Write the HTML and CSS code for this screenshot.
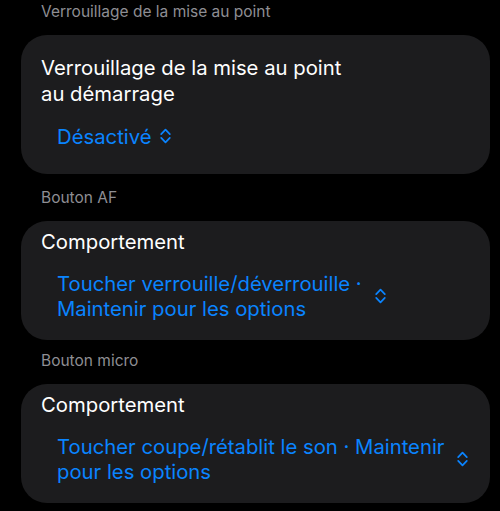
FILE: index.html
```html
<!DOCTYPE html>
<html lang="fr">
<head>
  <meta charset="UTF-8">
  <title>Réglages</title>
  <link rel="stylesheet" href="styles.css">
</head>
<body>
  <div class="list">

    <!-- Verrouillage -->
    <div class="group group-top">
      <div class="group-label">Verrouillage de la mise au point</div>
      <div class="card card-tall">
        <div class="title">Verrouillage de la mise au point<br>au démarrage</div>
        <div class="value value-single">
          <span>Désactivé</span>
          <svg class="chevron" viewBox="0 0 11 16"><path d="M1.2 6.2 L5.5 1.6 L9.8 6.2 M1.2 9.8 L5.5 14.4 L9.8 9.8"/></svg>
        </div>
      </div>
    </div>

    <!-- Bouton AF -->
    <div class="group">
      <div class="group-label">Bouton AF</div>
      <div class="card">
        <div class="title">Comportement</div>
        <div class="value">
          <span>Toucher verrouille/déverrouille ·<br>Maintenir pour les options</span>
          <svg class="chevron" viewBox="0 0 11 16"><path d="M1.2 6.2 L5.5 1.6 L9.8 6.2 M1.2 9.8 L5.5 14.4 L9.8 9.8"/></svg>
        </div>
      </div>
    </div>

    <!-- Bouton micro -->
    <div class="group">
      <div class="group-label">Bouton micro</div>
      <div class="card">
        <div class="title">Comportement</div>
        <div class="value">
          <span>Toucher coupe/rétablit le son · Maintenir<br>pour les options</span>
          <svg class="chevron" viewBox="0 0 11 16"><path d="M1.2 6.2 L5.5 1.6 L9.8 6.2 M1.2 9.8 L5.5 14.4 L9.8 9.8"/></svg>
        </div>
      </div>
    </div>

  </div>
</body>
</html>
```

FILE: styles.css
```css
body { margin: 0; background: #000; font-family: Inter, "Liberation Sans", sans-serif; -webkit-font-smoothing: antialiased; }
.list { padding: 1.5px 10px 0 21px; }
.group { margin-bottom: 11px; }
.group-top { margin-bottom: 14px; }
.group-label { font-size: 15.5px; line-height: 20px; color: #8e8e93; padding: 0 20px; margin-bottom: 13.5px; }
.card { background: #1c1c1e; border-radius: 26px; padding: 8px 20px 18.5px 20px; }
.card-tall { padding-top: 20px; padding-bottom: 25px; }
.title { font-size: 20.3px; line-height: 25px; color: #fff; }
.card-tall .title { line-height: 26px; }
.value { display: flex; align-items: center; gap: 13px; margin: 17px 0 0 16px; font-size: 20.3px; line-height: 25px; color: #0a84ff; }
.card-tall .value { margin-top: 16.5px; }
.value-single { gap: 8px; }
.chevron { width: 11px; height: 16px; flex: none; fill: none; stroke: #0a84ff; stroke-width: 1.7; stroke-linecap: round; stroke-linejoin: round; }
```
